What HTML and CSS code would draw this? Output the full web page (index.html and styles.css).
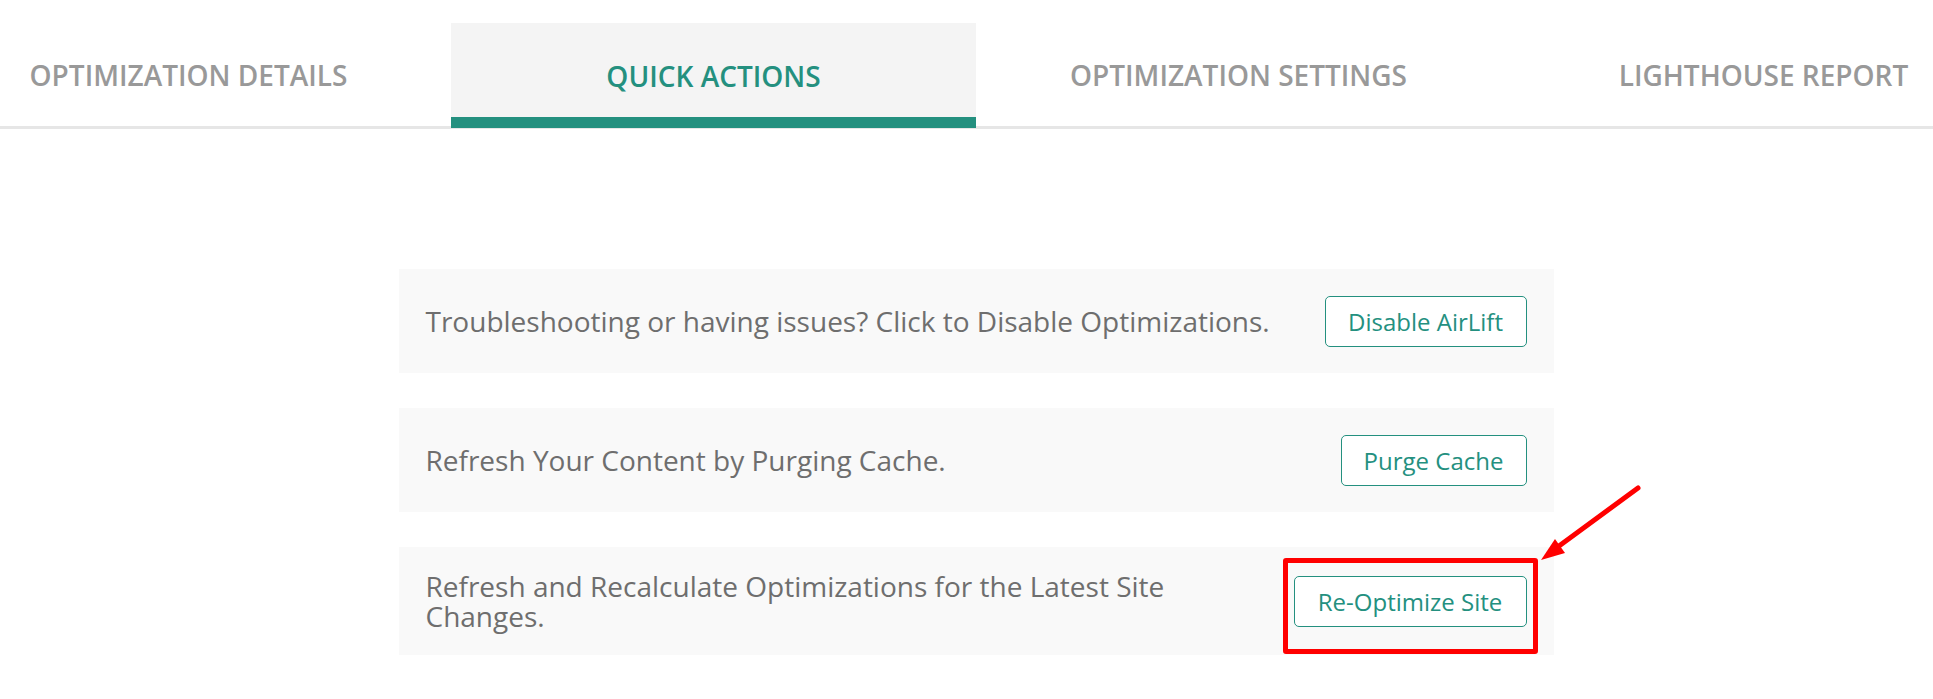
FILE: index.html
```html
<!DOCTYPE html>
<html lang="en">
<head>
<meta charset="utf-8">
<title>Quick Actions</title>
<link rel="stylesheet" href="styles.css">
</head>
<body>
<div class="page">
  <nav class="tabs">
    <div class="tab">OPTIMIZATION DETAILS</div>
    <div class="tab tab-active">QUICK ACTIONS</div>
    <div class="tab">OPTIMIZATION SETTINGS</div>
    <div class="tab">LIGHTHOUSE REPORT</div>
  </nav>
  <main class="panel">
    <div class="card">
      <div class="card-text">Troubleshooting or having issues? Click to Disable Optimizations.</div>
      <button class="btn btn-disable">Disable AirLift</button>
    </div>
    <div class="card">
      <div class="card-text">Refresh Your Content by Purging Cache.</div>
      <button class="btn btn-purge">Purge Cache</button>
    </div>
    <div class="card card-last">
      <div class="card-text card-text-narrow">Refresh and Recalculate Optimizations for the Latest Site Changes.</div>
      <button class="btn btn-reopt">Re-Optimize Site</button>
      <div class="highlight"></div>
      <svg class="arrow" width="120" height="90" viewBox="0 0 120 90">
        <line x1="109" y1="11" x2="30" y2="69" stroke="#ff0000" stroke-width="5" stroke-linecap="round"/>
        <polygon points="12,83 26,62 36,76" fill="#ff0000"/>
      </svg>
    </div>
  </main>
</div>
</body>
</html>
```
FILE: styles.css
```css
html, body {
  margin: 0;
  padding: 0;
  background: #ffffff;
  overflow: hidden;
}

body {
  font-family: "Open Sans", "Noto Sans", sans-serif;
}

.page {
  width: 2100px;
  margin-left: -74px;
  height: 699px;
}

.tabs {
  display: flex;
  align-items: flex-end;
  margin-top: 23px;
  border-bottom: 3px solid #e6e6e6;
}

.tab {
  width: 525px;
  height: 103px;
  box-sizing: border-box;
  display: flex;
  align-items: center;
  justify-content: center;
  font-size: 28px;
  font-weight: 600;
  color: #999999;
  letter-spacing: 0;
}

.tab-active {
  height: 105px;
  margin-bottom: -2px;
  padding-top: 11px;
  background: #f4f4f4;
  border-bottom: 11px solid #24907f;
  color: #24907f;
}

.panel {
  width: 1155px;
  margin: 140px auto 0;
  display: flex;
  flex-direction: column;
  gap: 35px;
}

.card {
  position: relative;
  background: #f9f9f9;
  display: flex;
  align-items: center;
  justify-content: space-between;
  padding: 26px 27px;
  min-height: 52px;
}

.card-last {
  padding-top: 24px;
  padding-bottom: 24px;
}

.card-text {
  font-size: 28px;
  line-height: 30px;
  color: #6e6e6e;
}

.card-text-narrow {
  max-width: 770px;
}

.btn {
  font-family: "Open Sans", "Noto Sans", sans-serif;
  font-size: 24px;
  color: #24907f;
  background: #ffffff;
  border: 1px solid #24907f;
  border-radius: 5px;
  height: 51px;
  padding: 0 20px;
  flex-shrink: 0;
}

.btn-disable { width: 202px; }
.btn-purge { width: 186px; }
.btn-reopt { width: 233px; }

.highlight {
  position: absolute;
  left: 884px;
  top: 11px;
  width: 255px;
  height: 96px;
  box-sizing: border-box;
  border: 5px solid #ff0000;
  border-radius: 3px;
}

.arrow {
  position: absolute;
  left: 1130px;
  top: -70px;
}
```
